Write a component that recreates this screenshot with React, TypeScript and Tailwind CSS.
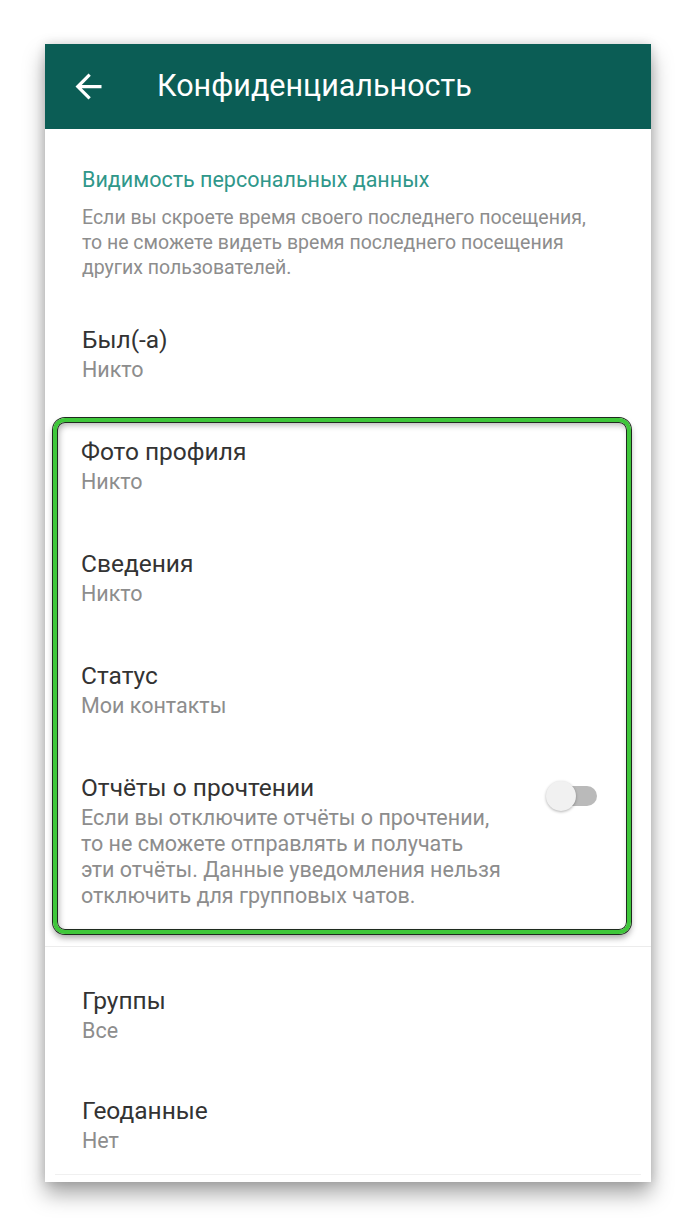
import React from "react";

type Item = { title: string; value: string };

const highlighted: Item[] = [
  { title: "Фото профиля", value: "Никто" },
  { title: "Сведения", value: "Никто" },
  { title: "Статус", value: "Мои контакты" },
];

const bottomItems: Item[] = [
  { title: "Группы", value: "Все" },
  { title: "Геоданные", value: "Нет" },
];

const Row: React.FC<{ item: Item }> = ({ item }) => (
  <div>
    <div className="text-[24.5px] leading-[30px] text-[#333333]">{item.title}</div>
    <div className="mt-[2px] text-[21.5px] leading-[26px] text-[#8d8d8d]">{item.value}</div>
  </div>
);

// off-state material switch
const Switch: React.FC = () => (
  <div className="relative w-[51px] h-[30px] flex items-center">
    <div className="ml-[8px] w-[43px] h-[20px] rounded-full bg-[#bababa]" />
    <div className="absolute left-0 top-0 w-[30px] h-[30px] rounded-full bg-[#f1f1f1] shadow-[0_1px_3px_rgba(0,0,0,0.3)]" />
  </div>
);

const App: React.FC = () => {
  return (
    <div className="min-h-screen bg-white pt-[44px] pb-[46px]" style={{ fontFamily: "Roboto, 'Noto Sans', sans-serif" }}>
      <div className="ml-[45px] w-[606px] bg-white shadow-[0_12px_20px_rgba(0,0,0,0.35),0_0_10px_rgba(0,0,0,0.15)]">
        {/* Toolbar */}
        <div className="h-[85px] bg-[#0b5d55] flex items-center">
          <svg className="ml-[24px]" width="39" height="39" viewBox="0 0 24 24" fill="#ffffff">
            <path d="M20 11H7.83l5.59-5.59L12 4l-8 8 8 8 1.41-1.41L7.83 13H20v-2z" />
          </svg>
          <h1 className="ml-[49px] text-[30.5px] leading-none text-white">Конфиденциальность</h1>
        </div>

        <div className="pt-[38px] px-[37px]">
          <div className="text-[21.5px] leading-[26px] text-[#2f978a]">Видимость персональных данных</div>
          <p className="mt-[12px] text-[19.5px] leading-[25px] text-[#8d8d8d] whitespace-nowrap">
            Если вы скроете время своего последнего посещения,
            <br />
            то не сможете видеть время последнего посещения
            <br />
            других пользователей.
          </p>
          <div className="mt-[45px]">
            <Row item={{ title: "Был(-а)", value: "Никто" }} />
          </div>
        </div>

        {/* Highlighted block */}
        <div className="mt-[35px] ml-[8px] mr-[20px] rounded-[12px] border-[4px] border-[#3ec73a] shadow-[0_0_0_1px_#1f2a1f,inset_0_0_0_1px_#1f2a1f,inset_2px_3px_6px_rgba(0,0,0,0.3),0_4px_6px_rgba(0,0,0,0.35)] pt-[15px] pb-[21px] pl-[24px] pr-[30px]">
          <div className="flex flex-col gap-[54px]">
            {highlighted.map((item) => (
              <Row key={item.title} item={item} />
            ))}
            <div className="flex justify-between">
              <div>
                <div className="text-[24.5px] leading-[30px] text-[#333333]">Отчёты о прочтении</div>
                <p className="mt-[2px] text-[21.5px] leading-[26px] text-[#8d8d8d] whitespace-nowrap">
                  Если вы отключите отчёты о прочтении,
                  <br />
                  то не сможете отправлять и получать
                  <br />
                  эти отчёты. Данные уведомления нельзя
                  <br />
                  отключить для групповых чатов.
                </p>
              </div>
              <div className="mt-[8px]">
                <Switch />
              </div>
            </div>
          </div>
        </div>

        <div className="mt-[12px] h-px bg-[#ececec]" />

        <div className="pt-[39px] px-[37px] flex flex-col gap-[52px]">
          {bottomItems.map((item) => (
            <Row key={item.title} item={item} />
          ))}
        </div>
        <div className="mt-[20px] mx-[10px] h-px bg-[#f0f0f0]" />
        <div className="h-[7px]" />
      </div>
    </div>
  );
};

export default App;
